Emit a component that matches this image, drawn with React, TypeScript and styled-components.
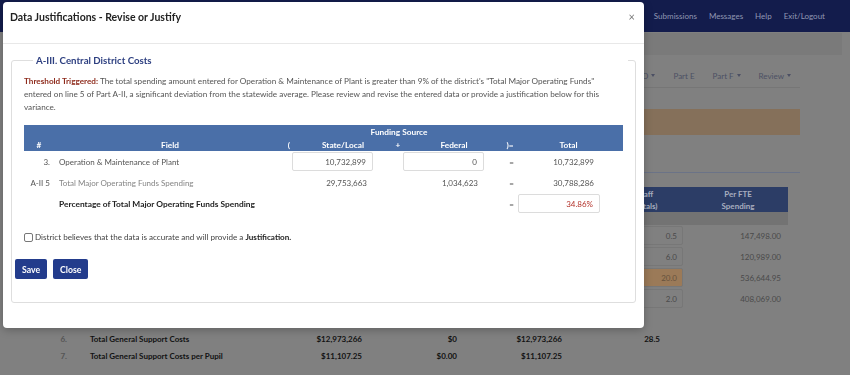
import React from 'react'
import styled, { createGlobalStyle } from 'styled-components'

const GlobalStyle = createGlobalStyle`
  html, body {
    margin: 0;
    padding: 0;
  }
  body {
    background: #808080;
    font-family: Lato, "Open Sans", sans-serif;
    overflow: hidden;
  }
`

const tabs: { label: string; menu: boolean }[] = [
  { label: 'Part A', menu: true },
  { label: 'Part B', menu: true },
  { label: 'Part C', menu: true },
  { label: 'Part D', menu: true },
  { label: 'Part E', menu: false },
  { label: 'Part F', menu: true },
  { label: 'Review', menu: true },
]

type CostRow = {
  n: string
  label: string
  staff?: string
  perFte?: string
  flagged?: boolean
}

const costRows: CostRow[] = [
  { n: '1.', label: 'Board of Education', staff: '0.5', perFte: '147,498.00' },
  { n: '2.', label: 'Central Administration', staff: '6.0', perFte: '120,989.00' },
  { n: '3.', label: 'Operation & Maintenance of Plant', staff: '20.0', perFte: '536,644.95', flagged: true },
  { n: '4.', label: 'Central Data Processing', staff: '2.0', perFte: '408,069.00' },
  { n: '5.', label: 'Other Central Services' },
]

const App: React.FC = () => {
  const [justify, setJustify] = React.useState<boolean>(false)
  return (
    <>
      <GlobalStyle />
      <Page>
        <NavBar>
          <NavLink>Submissions</NavLink>
          <NavLink>Messages</NavLink>
          <NavLink>Help</NavLink>
          <NavLink>Exit/Logout</NavLink>
        </NavBar>
        <HeaderStrip />
        <Container>
          <Tabs>
            {tabs.map((t) => (
              <Tab key={t.label} $menu={t.menu}>
                {t.label}
              </Tab>
            ))}
          </Tabs>
          <Alert />
          <SectionTitle>A-III. Central District Costs</SectionTitle>
          <CostTable>
            <CostHead>
              <span>#</span>
              <span>Description</span>
              <span>State/Local</span>
              <span>Federal</span>
              <span>Total</span>
              <StaffHead>
                Staff
                <br />
                (Totals)
              </StaffHead>
              <span>
                Per FTE
                <br />
                Spending
              </span>
            </CostHead>
            <SubHead />
            {costRows.map((r) => (
              <CostLine key={r.n}>
                <LineNo>{r.n}</LineNo>
                <LineLabel>{r.label}</LineLabel>
                <span />
                <span />
                <span />
                <StaffCell>
                  {r.staff && <StaffBox $flagged={r.flagged}>{r.staff}</StaffBox>}
                </StaffCell>
                <PerFte>{r.perFte}</PerFte>
              </CostLine>
            ))}
            <TotalLine>
              <LineNo>6.</LineNo>
              <TotalLabel>Total General Support Costs</TotalLabel>
              <TotalNum>$12,973,266</TotalNum>
              <TotalNum>$0</TotalNum>
              <TotalNum>$12,973,266</TotalNum>
              <TotalNum $pad={28}>28.5</TotalNum>
              <span />
            </TotalLine>
            <TotalLine>
              <LineNo>7.</LineNo>
              <TotalLabel>Total General Support Costs per Pupil</TotalLabel>
              <TotalNum>$11,107.25</TotalNum>
              <TotalNum>$0.00</TotalNum>
              <TotalNum>$11,107.25</TotalNum>
              <span />
              <span />
            </TotalLine>
          </CostTable>
        </Container>
      </Page>

      <Modal role="dialog">
        <ModalHeader>
          <ModalTitle>Data Justifications - Revise or Justify</ModalTitle>
          <CloseX>×</CloseX>
        </ModalHeader>
        <ModalBody>
          <Fieldset>
            <Legend>A-III. Central District Costs</Legend>
            <Content>
              <Notice>
                <Triggered>Threshold Triggered:</Triggered> The total spending amount entered for
                Operation &amp; Maintenance of Plant is greater than 9% of the district's "Total
                Major Operating Funds" entered on line 5 of Part A-II, a significant deviation from
                the statewide average. Please review and revise the entered data or provide a
                justification below for this variance.
              </Notice>

              <Table>
                <Head>
                  <HeadRow $h={12}>
                    <HeadCell $span="4 / 7">Funding Source</HeadCell>
                  </HeadRow>
                  <HeadRow $h={13}>
                    <HeadCell>#</HeadCell>
                    <HeadCell>Field</HeadCell>
                    <HeadCell>(</HeadCell>
                    <HeadCell>State/Local</HeadCell>
                    <HeadCell>+</HeadCell>
                    <HeadCell>Federal</HeadCell>
                    <HeadCell>)=</HeadCell>
                    <HeadCell>Total</HeadCell>
                  </HeadRow>
                </Head>

                <Row>
                  <RowNo>3.</RowNo>
                  <Field>Operation &amp; Maintenance of Plant</Field>
                  <span />
                  <AmountInput defaultValue="10,732,899" />
                  <span />
                  <AmountInput defaultValue="0" />
                  <Equals>=</Equals>
                  <Amount>10,732,899</Amount>
                </Row>
                <Row>
                  <RowNo>A-II 5</RowNo>
                  <Field $tone="muted">Total Major Operating Funds Spending</Field>
                  <span />
                  <Amount>29,753,663</Amount>
                  <span />
                  <Amount>1,034,623</Amount>
                  <Equals>=</Equals>
                  <Amount>30,788,286</Amount>
                </Row>
                <Row>
                  <span />
                  <Field $tone="strong">Percentage of Total Major Operating Funds Spending</Field>
                  <span />
                  <span />
                  <span />
                  <span />
                  <Equals>=</Equals>
                  <AmountInput $alert readOnly value="34.86%" />
                </Row>
              </Table>

              <CheckLine>
                <CheckBox
                  type="checkbox"
                  checked={justify}
                  onChange={() => setJustify(!justify)}
                />
                District believes that the data is accurate and will provide a{' '}
                <b>Justification.</b>
              </CheckLine>
            </Content>
            <Buttons>
              <Button>Save</Button>
              <Button>Close</Button>
            </Buttons>
          </Fieldset>
        </ModalBody>
      </Modal>
    </>
  )
}
export default App

/* ---------- page behind the dialog (drawn dimmed) ---------- */

const Page = styled.div`
  width: 850px;
  height: 375px;
  overflow: hidden;
  background: #808080;
`

const NavBar = styled.nav`
  height: 32px;
  background: #131c4c;
  display: flex;
  justify-content: flex-end;
  align-items: center;
  gap: 12px;
  padding-right: 25px;
`

const NavLink = styled.a`
  color: #9197b3;
  font-size: 8px;
  cursor: pointer;
`

const HeaderStrip = styled.div`
  height: 22px;
  margin: 1px 8px 0;
  background: #7a7a7a;
`

const Container = styled.div`
  width: 750px;
  margin: 0 auto;
`

const Tabs = styled.ul`
  display: flex;
  justify-content: flex-end;
  align-items: center;
  height: 23px;
  margin: 9px 0 0;
  padding: 0;
  list-style: none;
  border-bottom: 1px solid #767676;
`

const Tab = styled.li<{ $menu: boolean }>`
  font-size: 8px;
  color: #4c5064;
  padding: 0 9px;
  display: flex;
  align-items: center;
  &:last-child {
    padding-right: 9px;
  }
  &::after {
    content: '';
    display: ${(p) => (p.$menu ? 'block' : 'none')};
    margin-left: 3px;
    border-top: 3px solid #4c5064;
    border-left: 2.5px solid transparent;
    border-right: 2.5px solid transparent;
  }
`

const Alert = styled.div`
  height: 26px;
  margin-top: 21px;
  background: #85705a;
`

const SectionTitle = styled.h3`
  height: 38px;
  margin: 0;
  border-bottom: 1px solid #6b7387;
  font-size: 11px;
  color: #1d2a55;
  display: flex;
  align-items: flex-end;
  padding-bottom: 4px;
  box-sizing: border-box;
`

const costCols = '35px 205px 80px 95px 105px 118px 100px'

const CostTable = styled.div`
  width: 738px;
  margin-top: 14px;
  font-size: 8px;
`

const CostHead = styled.div`
  display: grid;
  grid-template-columns: ${costCols};
  height: 25px;
  align-items: center;
  background: #2c3d66;
  color: #a8aebf;
  font-weight: 700;
  line-height: 12px;
  text-align: center;
`

const StaffHead = styled.span`
  padding-left: 32px;
`

const SubHead = styled.div`
  height: 13px;
  background: #737373;
`

const CostLine = styled.div`
  display: grid;
  grid-template-columns: ${costCols};
  height: 21px;
  align-items: center;
  color: #4a4a4a;
`

const LineNo = styled.span`
  text-align: right;
  padding-right: 18px;
  color: #555;
`

const LineLabel = styled.span`
  padding-left: 5px;
`

const StaffCell = styled.div`
  display: flex;
  justify-content: flex-end;
  padding-right: 5px;
`

const StaffBox = styled.div<{ $flagged?: boolean }>`
  width: 60px;
  height: 19px;
  box-sizing: border-box;
  border: 1px solid #777;
  border-radius: 2px;
  background: ${(p) => (p.$flagged ? '#9b7a58' : '#808080')};
  color: ${(p) => (p.$flagged ? '#66523d' : '#4a4a4a')};
  display: flex;
  align-items: center;
  justify-content: flex-end;
  padding-right: 5px;
`

const PerFte = styled.span`
  text-align: right;
  padding-right: 7px;
`

const TotalLine = styled.div`
  display: grid;
  grid-template-columns: ${costCols};
  height: 17px;
  align-items: center;
  color: #121212;
  font-weight: 700;
`

const TotalLabel = styled.span`
  padding-left: 5px;
`

const TotalNum = styled.span<{ $pad?: number }>`
  text-align: right;
  padding-right: ${(p) => p.$pad ?? 8}px;
`

/* ---------- dialog ---------- */

const Modal = styled.div`
  position: fixed;
  top: 2px;
  left: 3px;
  width: 641px;
  background: #fff;
  border-radius: 4px;
  box-shadow: 0 2px 8px rgba(0, 0, 0, 0.25);
`

const ModalHeader = styled.div`
  height: 42px;
  box-sizing: border-box;
  padding: 9px 9px 0 7px;
  display: flex;
  justify-content: space-between;
  align-items: flex-start;
  border-bottom: 1px solid #e8e8e8;
`

const ModalTitle = styled.h5`
  margin: 0;
  font-size: 10.5px;
  line-height: 12px;
  font-weight: 700;
  color: #222;
`

const CloseX = styled.button`
  border: 0;
  background: none;
  padding: 0;
  margin-top: 1px;
  font-family: inherit;
  font-size: 11px;
  line-height: 10px;
  color: #777;
  cursor: pointer;
`

const ModalBody = styled.div`
  padding: 10px 8px 25px;
`

const Fieldset = styled.fieldset`
  margin: 0;
  padding: 0 3px 23px;
  border: 1px solid #dedede;
  border-radius: 3px;
`

const Legend = styled.legend`
  width: 595px;
  box-sizing: border-box;
  margin-left: 18px;
  padding: 0 3px;
  font-size: 9.7px;
  line-height: 12px;
  font-weight: 700;
  color: #2d3f80;
`

const Content = styled.div`
  padding: 0 9px;
`

const Notice = styled.p`
  margin: 9px 0 0;
  font-size: 8.17px;
  line-height: 13px;
  color: #555;
`

const Triggered = styled.b`
  color: #8e2b1c;
`

const Table = styled.div`
  margin-top: 11px;
  font-size: 8px;
`

const Head = styled.div`
  background: #4a6fa8;
  color: #fff;
  font-weight: 700;
  font-size: 8.3px;
  padding-top: 1px;
`

const HeadRow = styled.div<{ $h: number }>`
  display: grid;
  grid-template-columns: 30px 232px 6px 102px 8px 104px 8px 109px;
  height: ${(p) => p.$h}px;
  align-items: center;
`

const HeadCell = styled.div<{ $span?: string }>`
  grid-column: ${(p) => p.$span ?? 'auto'};
  text-align: center;
  white-space: nowrap;
`

const Row = styled.div`
  display: grid;
  grid-template-columns: 30px 232px 6px 81px 30px 81px 34px 82px 23px;
  height: 21px;
  align-items: center;
  color: #555;
`

const RowNo = styled.span`
  text-align: right;
  padding-right: 4px;
  white-space: nowrap;
`

const Field = styled.span<{ $tone?: 'muted' | 'strong' }>`
  padding-left: 5px;
  white-space: nowrap;
  color: ${(p) => (p.$tone === 'muted' ? '#858585' : p.$tone === 'strong' ? '#222' : '#555')};
  font-weight: ${(p) => (p.$tone === 'strong' ? 700 : 400)};
  font-size: ${(p) => (p.$tone === 'strong' ? '8.4px' : '8px')};
`

const Amount = styled.span`
  text-align: right;
  padding-right: 6px;
`

const Equals = styled.span`
  text-align: right;
  padding-right: 4px;
`

const AmountInput = styled.input<{ $alert?: boolean }>`
  width: 100%;
  height: 19px;
  box-sizing: border-box;
  margin: 0;
  padding: 0 6px 0 0;
  border: 1px solid #dcdcdc;
  border-radius: 2px;
  background: #fff;
  font-family: inherit;
  font-size: 8px;
  text-align: right;
  color: ${(p) => (p.$alert ? '#b3322a' : '#555')};
  outline: none;
`

const CheckLine = styled.label`
  display: flex;
  align-items: center;
  margin-top: 17px;
  height: 12px;
  font-size: 8.1px;
  color: #444;
  white-space: pre;
  b {
    color: #222;
  }
`

const CheckBox = styled.input`
  appearance: none;
  width: 9px;
  height: 9px;
  margin: 0 2px 0 0;
  border: 1px solid #777;
  border-radius: 2px;
  background: #fff;
  &:checked {
    background: #233d8c;
  }
`

const Buttons = styled.div`
  display: flex;
  gap: 6px;
  margin-top: 16px;
`

const Button = styled.button`
  height: 20px;
  padding: 0 7px;
  border: 0;
  border-radius: 2px;
  background: #233c8c;
  color: #fff;
  font-family: inherit;
  font-size: 8.7px;
  font-weight: 700;
  cursor: pointer;
`
